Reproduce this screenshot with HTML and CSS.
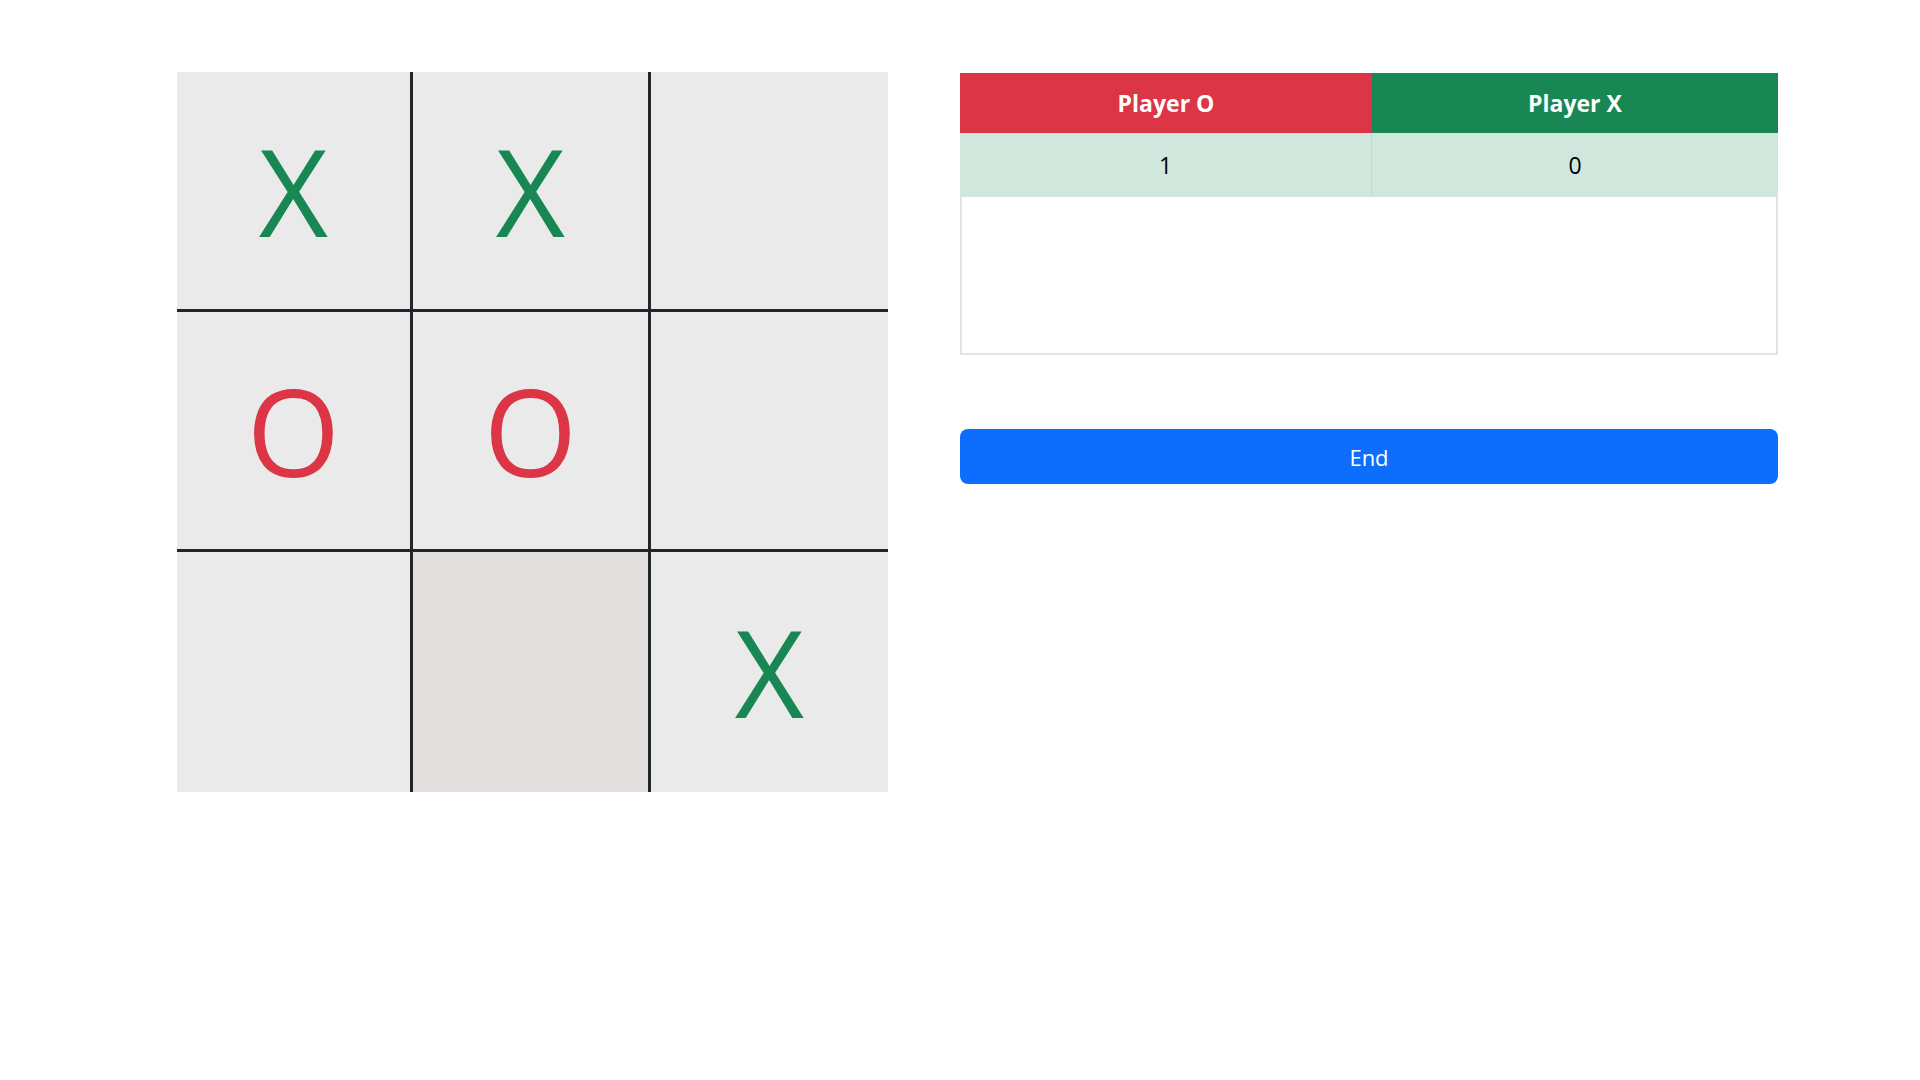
FILE: index.html
```html
<!DOCTYPE html>
<html lang="en">
<head>
<meta charset="utf-8">
<title>Tic Tac Toe</title>
<link rel="stylesheet" href="styles.css">
</head>
<body>
<main class="layout">
  <section class="board">
    <div class="cell mark-x">X</div>
    <div class="cell mark-x">X</div>
    <div class="cell"></div>
    <div class="cell mark-o">O</div>
    <div class="cell mark-o">O</div>
    <div class="cell"></div>
    <div class="cell"></div>
    <div class="cell cell-hover"></div>
    <div class="cell mark-x">X</div>
  </section>
  <section class="side">
    <div class="score">
      <div class="score-head">
        <div class="head head-o">Player O</div>
        <div class="head head-x">Player X</div>
      </div>
      <div class="score-row">
        <div class="val val-o">1</div>
        <div class="val val-x">0</div>
      </div>
      <div class="score-body"></div>
    </div>
    <button class="end-btn" type="button">End</button>
  </section>
</main>
</body>
</html>
```

FILE: styles.css
```css
* { box-sizing: border-box; }
html, body { margin: 0; padding: 0; background: #ffffff; }
body {
  font-family: "Open Sans", "Noto Sans", "Liberation Sans", sans-serif;
  color: #212529;
}
.layout {
  display: flex;
  align-items: flex-start;
  gap: 72px;
  padding: 72px 0 0 177px;
}
.board {
  width: 711px;
  height: 720px;
  display: grid;
  grid-template-columns: 233px 235px 1fr;
  grid-template-rows: 237px 237px 1fr;
  gap: 3px;
  background: #212529;
}
.cell {
  background: #eaeaea;
  display: flex;
  align-items: center;
  justify-content: center;
  font-size: 120px;
  line-height: 1;
  font-weight: 400;
}
.cell-hover { background: #e2dede; }
.mark-x { color: #198754; }
.mark-o { color: #dc3545; }
.side {
  width: 818px;
  display: flex;
  flex-direction: column;
  gap: 74px;
  padding-top: 1px;
}
.score { width: 100%; }
.score-head, .score-row {
  display: grid;
  grid-template-columns: 412px 1fr;
}
.head {
  height: 60px;
  display: flex;
  align-items: center;
  justify-content: center;
  color: #ffffff;
  font-weight: 700;
  font-size: 23px;
}
.head-o { background: #dc3545; }
.head-x { background: #198754; }
.score-row { background: #d1e7dd; }
.val {
  height: 64px;
  display: flex;
  align-items: center;
  justify-content: center;
  font-size: 23px;
  color: #000;
}
.val-o { border-right: 1px solid #c3d8ce; }
.score-body {
  height: 158px;
  border: 2px solid #e4e4e4;
  border-top: none;
  background: #ffffff;
}
.end-btn {
  width: 100%;
  height: 55px;
  border: none;
  border-radius: 8px;
  background: #0d6efd;
  color: #ffffff;
  font-family: "Open Sans", "Noto Sans", "Liberation Sans", sans-serif;
  font-size: 22px;
  cursor: pointer;
}
```
